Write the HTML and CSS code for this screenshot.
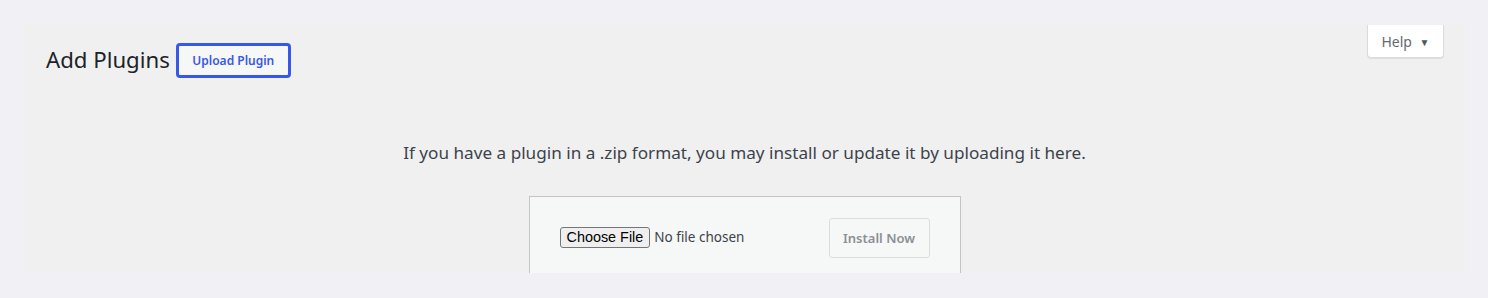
FILE: index.html
```html
<!DOCTYPE html>
<html lang="en">
<head>
<meta charset="utf-8">
<title>Add Plugins</title>
<link rel="stylesheet" href="styles.css">
</head>
<body>
<div class="panel">
  <div class="help-wrap">
    <button class="help-btn" type="button">Help <span class="caret">▼</span></button>
  </div>
  <div class="header">
    <h1 class="title">Add Plugins</h1>
    <a class="upload-btn" href="#">Upload Plugin</a>
  </div>
  <p class="intro">If you have a plugin in a .zip format, you may install or update it by uploading it here.</p>
  <form class="upload-box">
    <input class="file-input" type="file" name="pluginzip">
    <button class="install-btn" type="button" disabled>Install Now</button>
  </form>
</div>
</body>
</html>
```

FILE: styles.css
```css
html, body {
  margin: 0;
  padding: 0;
}
body {
  background: #f0f0f5;
  padding: 24px 23px 25px 24px;
  font-family: "Noto Sans", "Open Sans", sans-serif;
  color: #1d2327;
}
.panel {
  position: relative;
  background: #f0f0f1;
  height: 249px;
  overflow: hidden;
  padding: 0 22px;
}
.help-wrap {
  position: absolute;
  top: 1px;
  right: 21px;
}
.help-btn {
  box-sizing: border-box;
  width: 77px;
  height: 33px;
  background: #fff;
  border: 1px solid #dcdcde;
  border-top: none;
  border-radius: 0 0 4px 4px;
  box-shadow: 0 1px 1px rgba(0,0,0,0.08);
  font-family: inherit;
  font-size: 14px;
  color: #646970;
  padding: 1px 0 0 0;
}
.caret {
  font-size: 10px;
  margin-left: 4px;
  vertical-align: 1px;
  color: #50575e;
}
.header {
  display: flex;
  align-items: center;
  gap: 6px;
  padding-top: 18px;
}
.title {
  margin: 0;
  font-size: 22.2px;
  font-weight: 400;
  line-height: 35px;
  padding-bottom: 1px;
}
.upload-btn {
  box-sizing: border-box;
  height: 35px;
  width: 115px;
  justify-content: center;
  display: flex;
  align-items: center;
  border: 3px solid #3858e9;
  border-radius: 4px;
  color: #3858e9;
  font-size: 12px;
  font-weight: 600;
  text-decoration: none;
  background: #f6f7f7;
}
.intro {
  margin: 62px 0 0;
  text-align: center;
  font-size: 17.15px;
  color: #3c434a;
  line-height: 26px;
}
.upload-box {
  box-sizing: border-box;
  width: 432px;
  margin: 30px auto 0;
  height: 120px;
  background: #f6f7f7;
  border: 1px solid #c3c4c7;
  display: flex;
  align-items: flex-start;
  justify-content: space-between;
  padding: 21px 30px 0 30px;
}
.file-input {
  margin-top: 9px;
  font-family: inherit;
  font-size: 13.5px;
  color: #3c434a;
}
.file-input::file-selector-button {
  font-family: "Liberation Sans", Arial, sans-serif;
  font-size: 14.4px;
  padding: 1px 6px 2px;
  margin-right: 4px;
  border: 1px solid #767676;
  border-radius: 3px;
  background: #efefef;
  color: #000;
}
.install-btn {
  flex-shrink: 0;
  box-sizing: border-box;
  width: 101px;
  height: 40px;
  background: #f6f7f7;
  border: 1px solid #dcdcde;
  border-radius: 3px;
  color: #8c8f94;
  font-family: inherit;
  font-size: 13px;
  font-weight: 600;
}
```
